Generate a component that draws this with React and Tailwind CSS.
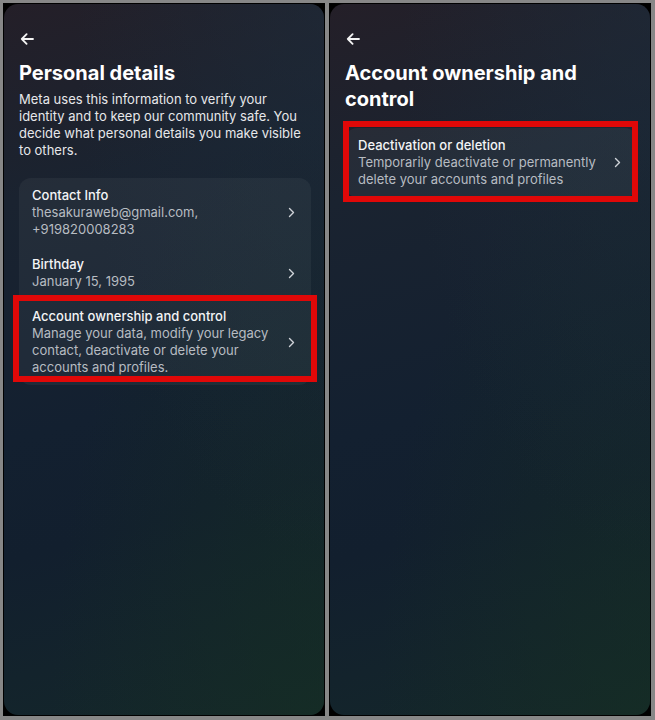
import React from "react";

const font = { fontFamily: "Inter, 'Noto Sans', sans-serif" };

function BackArrow() {
  return (
    <svg width="14" height="12" viewBox="0 0 14 12" fill="none" className="mt-[29px] ml-[1px] block">
      <path d="M13 6H1.8M6.6 1.2L1.8 6l4.8 4.8" stroke="#f4f4f4" strokeWidth="1.8" strokeLinecap="round" strokeLinejoin="round" />
    </svg>
  );
}

function Chevron() {
  return (
    <svg width="7" height="11" viewBox="0 0 7 11" fill="none" className="shrink-0">
      <path d="M1.5 1.5L5.5 5.5L1.5 9.5" stroke="#cfd3d8" strokeWidth="1.4" strokeLinecap="round" strokeLinejoin="round" />
    </svg>
  );
}

function Row({ title, lines, highlight }) {
  return (
    <div className="relative flex items-center pl-[13px] pr-[16px] py-[9px]">
      <div className="flex-1">
        <div className="text-[13px] leading-[17px] font-medium text-[#f3f4f6]">{title}</div>
        {lines.map((l, i) => (
          <div key={i} className="text-[13px] leading-[17px] text-[#b7bcc2]">{l}</div>
        ))}
      </div>
      <Chevron />
      {highlight && (
        <div className="absolute -left-[6px] -right-[6px] -top-[4px] bottom-[3px] border-[6px] border-[#e00808]" />
      )}
    </div>
  );
}

function Panel({ children }) {
  return (
    <div className="w-[322px] h-[713px] bg-black p-px">
      <div className="relative h-full rounded-[14px] overflow-hidden bg-[linear-gradient(165deg,#241f28_0%,#1a2330_25%,#132030_55%,#121f2e_70%,#14272a_100%)]">
        <div className="absolute inset-0 bg-[radial-gradient(ellipse_at_100%_100%,rgba(22,48,34,0.55),transparent_60%)]" />
        <div className="absolute inset-0 bg-[radial-gradient(ellipse_at_100%_0%,rgba(30,45,60,0.5),transparent_55%)]" />
        <div className="relative pl-[15px] pr-[13px]" style={font}>
          {children}
        </div>
      </div>
    </div>
  );
}

export default function App() {
  return (
    <div className="w-[655px] h-[720px] bg-[#878787] pt-[3px] pl-[3px] flex gap-[4px]">
      <Panel>
        <BackArrow />
        <h1 className="mt-[15px] text-[20px] leading-[26px] font-bold text-white">Personal details</h1>
        <p className="mt-[5px] text-[13px] leading-[17px] text-[#e6e7ea]">
          Meta uses this information to verify your identity and to keep our community safe. You decide what personal details you make visible to others.
        </p>
        <div className="mt-[19px] rounded-[12px] bg-[#ffffff0c]">
          <Row title="Contact Info" lines={["thesakuraweb@gmail.com,", "+919820008283"]} />
          <Row title="Birthday" lines={["January 15, 1995"]} />
          <Row
            title="Account ownership and control"
            lines={["Manage your data, modify your legacy", "contact, deactivate or delete your", "accounts and profiles."]}
            highlight
          />
        </div>
      </Panel>
      <Panel>
        <BackArrow />
        <h1 className="mt-[15px] text-[20px] leading-[26px] font-bold text-white">Account ownership and control</h1>
        <div className="relative mt-[16px] rounded-[12px] bg-[#ffffff0c]">
          <div className="flex items-center pl-[13px] pr-[16px] py-[9px]">
            <div className="flex-1">
              <div className="text-[13px] leading-[17px] font-medium text-[#f3f4f6]">Deactivation or deletion</div>
              <div className="text-[13px] leading-[17px] text-[#b7bcc2]">Temporarily deactivate or permanently</div>
              <div className="text-[13px] leading-[17px] text-[#b7bcc2]">delete your accounts and profiles</div>
            </div>
            <Chevron />
          </div>
          <div className="absolute -left-[2px] -right-[1px] -top-[7px] -bottom-[5px] border-[6px] border-[#e00808]" />
        </div>
      </Panel>
    </div>
  );
}
